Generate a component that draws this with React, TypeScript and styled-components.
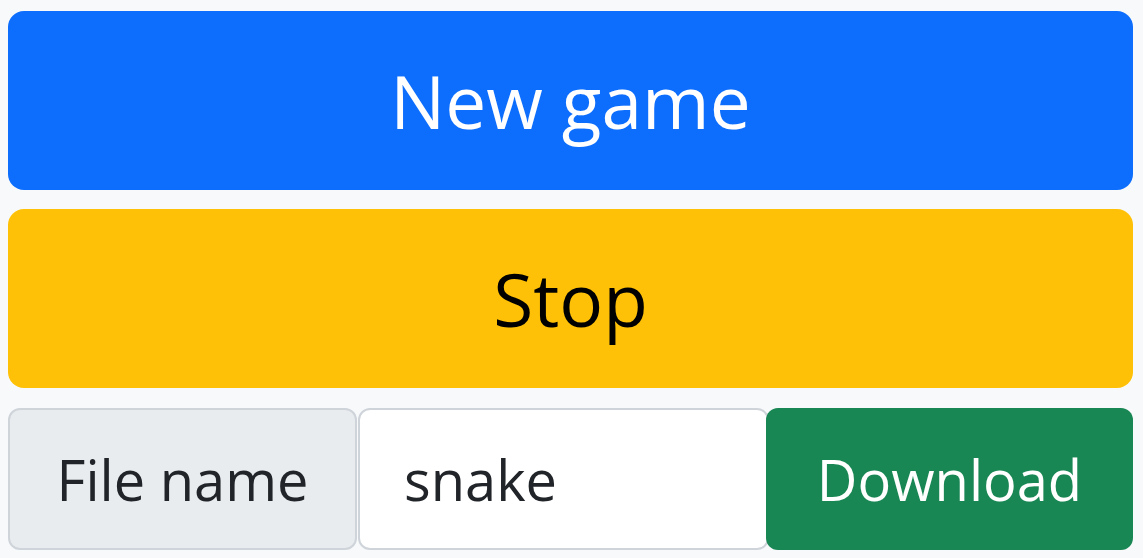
import React from "react";
import styled, { createGlobalStyle } from "styled-components";

const Global = createGlobalStyle`
  html, body { margin: 0; padding: 0; background: #f8f9fa; }
  body { font-family: "Open Sans", "Noto Sans", "Liberation Sans", sans-serif; }
  * { box-sizing: border-box; }
`;

const Page = styled.div`
  display: flex;
  flex-direction: column;
  gap: 19px;
  padding: 11px 10px 8px 8px;
`;

const BigButton = styled.button<{ $bg: string; $fg: string }>`
  height: 179px;
  width: 100%;
  border: none;
  border-radius: 16px;
  background: ${(p) => p.$bg};
  color: ${(p) => p.$fg};
  font-family: inherit;
  font-size: 73px;
  line-height: 1;
  display: flex;
  align-items: center;
  justify-content: center;
  padding: 0;
`;

const Row = styled.div`
  display: flex;
  height: 142px;
  margin-top: 1px;
`;

const Label = styled.span`
  width: 349px;
  flex: none;
  background: #e9ecef;
  border: 2px solid #ced4da;
  border-radius: 12px;
  color: #212529;
  font-size: 56px;
  display: flex;
  align-items: center;
  justify-content: center;
`;

const Input = styled.input`
  width: 411px;
  flex: none;
  margin-left: 1px;
  background: #fff;
  border: 2px solid #ced4da;
  border-radius: 12px;
  color: #212529;
  font-family: inherit;
  font-size: 56px;
  padding: 0 0 0 44px;
  outline: none;
`;

const Download = styled.button`
  flex: 1;
  margin-left: -3px;
  border: none;
  border-radius: 12px;
  background: #198754;
  color: #fff;
  font-family: inherit;
  font-size: 56px;
  display: flex;
  align-items: center;
  justify-content: center;
  padding: 0;
  position: relative;
`;

export default function App() {
  return (
    <>
      <Global />
      <Page>
        <BigButton $bg="#0d6efd" $fg="#fff">New game</BigButton>
        <BigButton $bg="#ffc107" $fg="#000">Stop</BigButton>
        <Row>
          <Label>File name</Label>
          <Input defaultValue="snake" />
          <Download>Download</Download>
        </Row>
      </Page>
    </>
  );
}
